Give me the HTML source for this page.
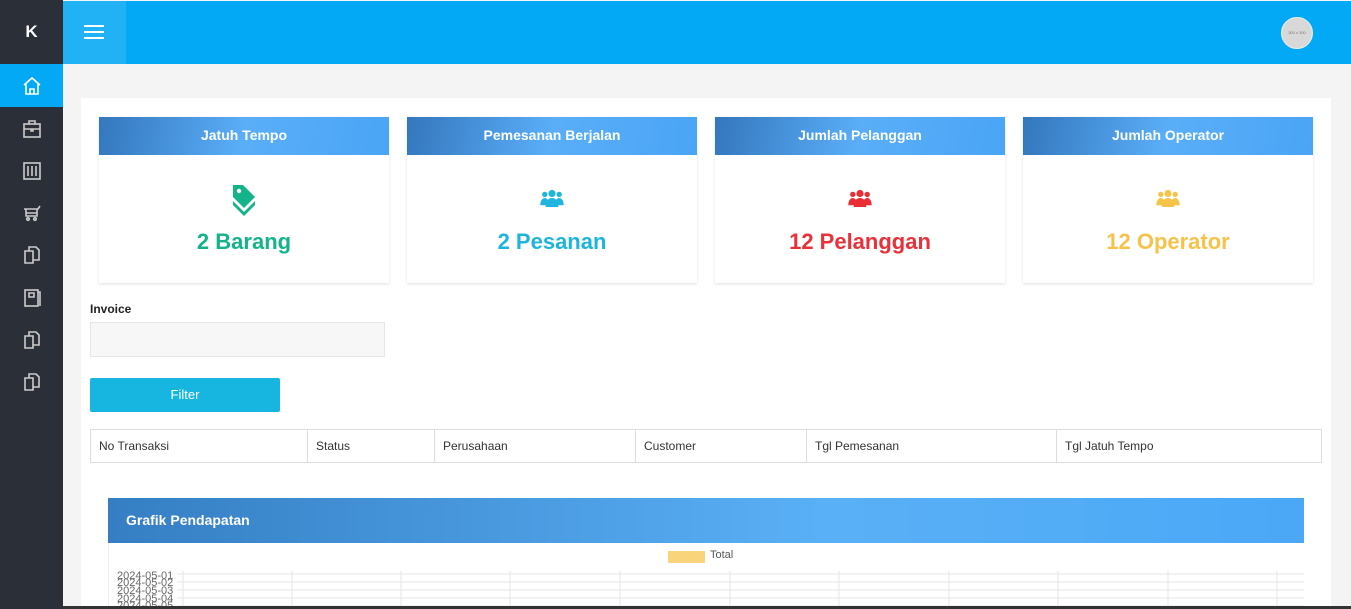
<!DOCTYPE html>
<html style="width:1351px;height:609px;overflow:hidden"><head><style>
*{margin:0;padding:0;box-sizing:border-box}
body{width:1351px;height:609px;overflow:hidden;background:#f4f4f4;font-family:"Liberation Sans",sans-serif;position:relative}
.sb{position:absolute;left:0;top:0;width:63px;height:609px;background:#2a2f38}
.logo{height:64px;color:#fff;font-weight:bold;font-size:17px;text-align:center;line-height:64px}
.act{position:absolute;top:64px;left:0;width:63px;height:43px;background:#03a9f4}
.ic{position:absolute;left:22px;width:20px;height:20px}
.top{position:absolute;left:63px;top:1px;width:1288px;height:63px;background:#03a9f4}
.ham{position:absolute;left:0;top:0;width:63px;height:63px;background:#21b1f5}
.ham i{position:absolute;left:21px;width:20px;height:2px;background:#fff}
.av{position:absolute;left:1218px;top:16px;width:32px;height:32px;border-radius:50%;background:#d8d8d8;border:1px solid #eee;font-size:4px;color:#777;text-align:center;line-height:30px}
.panel{position:absolute;left:81px;top:98px;width:1250px;height:511px;background:#fff}
.card{position:absolute;top:117px;width:290px;height:166px;background:#fff;box-shadow:0 1px 3px rgba(0,0,0,.12)}
.ch{height:38px;background:linear-gradient(100deg,#3477bd 0%,#5aaef8 50%,#4aa5f6 100%);color:#fff;font-weight:bold;font-size:14px;text-align:center;line-height:37px}
.val{position:absolute;top:112px;width:100%;text-align:center;font-weight:bold;font-size:22px}
.icn{position:absolute;top:66px;left:0;width:100%;text-align:center}
label{position:absolute;left:90px;top:302px;font-size:12px;font-weight:bold;color:#222}
.inp{position:absolute;left:90px;top:322px;width:295px;height:35px;background:#f7f7f7;border:1px solid #e6e6e6}
.btn{position:absolute;left:90px;top:378px;width:190px;height:34px;background:#17b6e0;color:#fff;font-size:13px;text-align:center;line-height:33px;border-radius:2px}
table{position:absolute;left:90px;top:429px;width:1232px;border-collapse:collapse;font-size:12px;color:#333}
td{border:1px solid #ddd;height:33px;padding:0 8px}
.gh{position:absolute;left:108px;top:498px;width:1196px;height:45px;background:linear-gradient(90deg,#357ec3,#5ab0f6 60%,#4aa8f7);color:#fff;font-weight:bold;font-size:14px;line-height:45px;padding-left:18px}
.gb{position:absolute;left:108px;top:543px;width:1196px;height:63px;background:#fff;border-left:1px solid #eee;overflow:hidden}
</style></head><body>
<div class="sb"><div class="logo">K</div><div class="act"></div>
<svg class="ic" style="top:76px" viewBox="0 0 20 20" fill="none" stroke="#fff" stroke-width="1.6"><path d="M2 9L10 2l8 7M4 8v10h12V8M8 18v-5h4v5"/></svg>
<svg class="ic" style="top:119px" viewBox="0 0 20 20" fill="none" stroke="#ccc" stroke-width="1.6"><rect x="2" y="5" width="16" height="13"/><path d="M7 5V2h6v3M2 10h16M9 10v2h2v-2"/></svg>
<svg class="ic" style="top:161px" viewBox="0 0 20 20" fill="none" stroke="#ccc" stroke-width="1.6"><rect x="2" y="2" width="16" height="16"/><path d="M6 5v10M10 5v10M14 5v10"/></svg>
<svg class="ic" style="top:203px" viewBox="0 0 20 20" fill="none" stroke="#ccc" stroke-width="1.6"><path d="M2 6h14l2-3M4 6v7h11V6M4 10h11"/><circle cx="6" cy="16" r="1.3"/><circle cx="13" cy="16" r="1.3"/></svg>
<svg class="ic" style="top:245px" viewBox="0 0 20 20" fill="none" stroke="#ccc" stroke-width="1.6"><path d="M3 6h8v12H3zM7 6V2h7l3 3v10h-6"/></svg>
<svg class="ic" style="top:288px" viewBox="0 0 20 20" fill="none" stroke="#ccc" stroke-width="1.6"><rect x="3" y="2" width="13" height="16"/><path d="M7 5h5v4H7zM16 4h2v14"/></svg>
<svg class="ic" style="top:330px" viewBox="0 0 20 20" fill="none" stroke="#ccc" stroke-width="1.6"><path d="M3 6h8v12H3zM7 6V2h7l3 3v10h-6"/></svg>
<svg class="ic" style="top:372px" viewBox="0 0 20 20" fill="none" stroke="#ccc" stroke-width="1.6"><path d="M3 6h8v12H3zM7 6V2h7l3 3v10h-6"/></svg>
</div>
<div class="top"><div class="ham"><i style="top:24px"></i><i style="top:30px"></i><i style="top:36px"></i></div><div class="av">300 x 300</div></div>
<div class="panel"></div>
<div class="card" style="left:99px"><div class="ch">Jatuh Tempo</div><div class="icn"><svg width="26" height="34" viewBox="0 0 26 34"><path d="M2 2h10l12 12-11 11L2 14z" fill="#14b48b"/><circle cx="8" cy="8" r="2.2" fill="#fff"/><path d="M2 18l11 11 11-11v4L13 33 2 22z" fill="#14b48b"/></svg></div><div class="val" style="color:#15b38a">2 Barang</div></div>
<div class="card" style="left:407px"><div class="ch">Pemesanan Berjalan</div><div class="icn" style="top:72px"><svg width="26" height="18" viewBox="0 0 28 20" fill="#1fb5de"><circle cx="6" cy="6" r="3"/><circle cx="22" cy="6" r="3"/><path d="M1 18c0-6 3-8 5-8s5 2 5 8zM17 18c0-6 3-8 5-8s5 2 5 8z"/><circle cx="14" cy="5" r="4"/><path d="M7 20c0-8 4-10 7-10s7 2 7 10z"/></svg></div><div class="val" style="color:#1db4dd">2 Pesanan</div></div>
<div class="card" style="left:715px"><div class="ch">Jumlah Pelanggan</div><div class="icn" style="top:72px"><svg width="26" height="18" viewBox="0 0 28 20" fill="#ea2d35"><circle cx="6" cy="6" r="3"/><circle cx="22" cy="6" r="3"/><path d="M1 18c0-6 3-8 5-8s5 2 5 8zM17 18c0-6 3-8 5-8s5 2 5 8z"/><circle cx="14" cy="5" r="4"/><path d="M7 20c0-8 4-10 7-10s7 2 7 10z"/></svg></div><div class="val" style="color:#e9313a">12 Pelanggan</div></div>
<div class="card" style="left:1023px"><div class="ch">Jumlah Operator</div><div class="icn" style="top:72px"><svg width="26" height="18" viewBox="0 0 28 20" fill="#f6c34b"><circle cx="6" cy="6" r="3"/><circle cx="22" cy="6" r="3"/><path d="M1 18c0-6 3-8 5-8s5 2 5 8zM17 18c0-6 3-8 5-8s5 2 5 8z"/><circle cx="14" cy="5" r="4"/><path d="M7 20c0-8 4-10 7-10s7 2 7 10z"/></svg></div><div class="val" style="color:#f6c24a">12 Operator</div></div>
<label>Invoice</label><div class="inp"></div><div class="btn">Filter</div>
<table><tr><td style="width:217px">No Transaksi</td><td style="width:127px">Status</td><td style="width:201px">Perusahaan</td><td style="width:171px">Customer</td><td style="width:250px">Tgl Pemesanan</td><td>Tgl Jatuh Tempo</td></tr></table>
<div class="gh">Grafik Pendapatan</div>
<div class="gb">
<div style="position:absolute;left:559px;top:8px;width:37px;height:12px;background:#fad47b"></div>
<div style="position:absolute;left:601px;top:6px;font-size:11px;color:#555">Total</div>
<svg style="position:absolute;left:0;top:25px" width="1196" height="41"><g stroke="#e5e5e5"><path d="M68 6H1196M68 14H1196M68 22H1196M68 30H1196M68 38H1196"/><path d="M74 3V41M183 3V41M292 3V41M401 3V41M511 3V41M621 3V41M730 3V41M840 3V41M949 3V41M1059 3V41M1168 3V41"/></g>
<g font-size="11" fill="#666" font-family="Liberation Sans"><text x="8" y="11">2024-05-01</text><text x="8" y="18">2024-05-02</text><text x="8" y="26">2024-05-03</text><text x="8" y="34">2024-05-04</text><text x="8" y="41">2024-05-05</text></g></svg>
</div>
<div style="position:absolute;left:63px;top:606px;width:1288px;height:3px;background:#333"></div>
</body></html>
